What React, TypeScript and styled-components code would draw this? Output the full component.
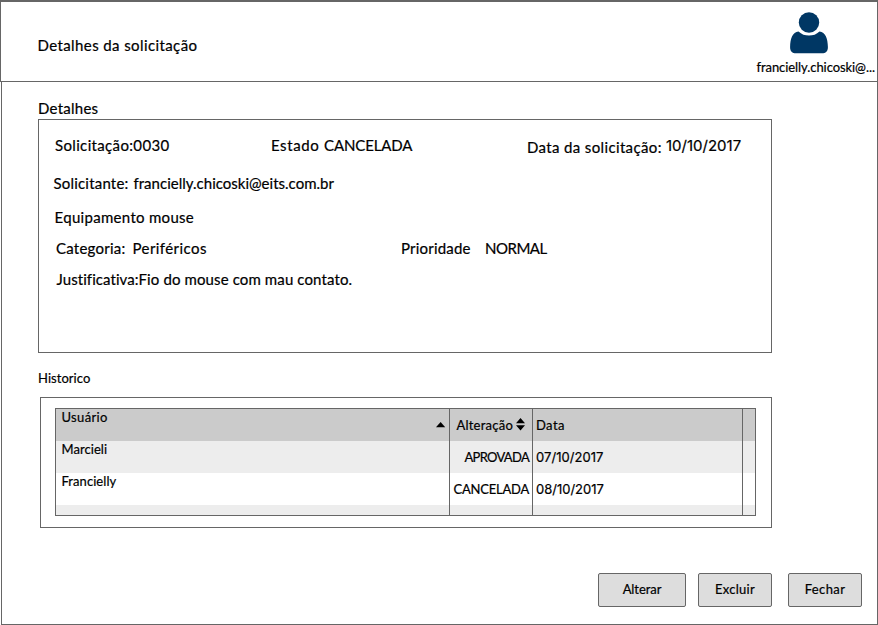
import React from 'react';
import styled, { createGlobalStyle } from 'styled-components';

const line = '#666';

const GlobalStyle = createGlobalStyle`
  *, *::before, *::after { box-sizing: border-box; }
  body { margin: 0; background: #fff; }
`;

const Page = styled.div`
  width: 878px;
  height: 625px;
  display: flex;
  flex-direction: column;
  color: #000;
  font-family: Lato, 'Open Sans', sans-serif;
`;

const Header = styled.header`
  display: flex;
  justify-content: space-between;
  height: 82px;
  flex: none;
  border: 1px solid ${line};
  border-top-width: 2px;
  padding: 33px 1px 0 36.5px;
`;

const Main = styled.main`
  flex: 1;
  display: flex;
  flex-direction: column;
  margin-left: 1px;
  padding: 16px 15px 0 36px;
  border: 1px solid ${line};
  border-top: 0;
`;

const Text = styled.span<{ $track?: number; $indent?: number; $drop?: number }>`
  display: block;
  font-size: 15px;
  line-height: 20px;
  white-space: pre;
  letter-spacing: ${p => p.$track ?? 0}px;
  margin-left: ${p => p.$indent ?? 0}px;
  margin-top: ${p => p.$drop ?? 0}px;
  -webkit-text-stroke: 0.2px #000;
`;

const Small = styled(Text)`
  font-size: 13px;
  line-height: 16px;
`;

const DateText = styled(Text)`
  font-family: Inter, sans-serif;
`;

const SmallDate = styled(Small)`
  font-family: Inter, sans-serif;
`;

const User = styled.div`
  display: flex;
  flex-direction: column;
  align-items: flex-start;
  width: 120px;
  margin-top: -23px;
`;

const Avatar = styled.svg`
  display: block;
  width: 38px;
  height: 42px;
  margin: 0 0 5px 34px;
`;

const Details = styled.section`
  flex: none;
  width: 734px;
  height: 234px;
  margin-top: 1px;
  border: 1px solid ${line};
  padding: 15px 0 0 14px;
`;

const Row = styled.div<{ $height: number }>`
  display: flex;
  align-items: flex-start;
  height: ${p => p.$height}px;
`;

const Label = styled.div<{ $width: number }>`
  flex: none;
  width: ${p => p.$width}px;
`;

const History = styled.section`
  flex: none;
  width: 732px;
  height: 131px;
  margin: 11px 0 0 2px;
  border: 1px solid ${line};
  padding: 10px 14px;
`;

const Table = styled.div`
  width: 701px;
  height: 108px;
  display: flex;
  flex-direction: column;
  overflow: hidden;
  border: 1px solid ${line};
`;

const TableRow = styled.div<{ $fill: string }>`
  display: grid;
  flex: none;
  grid-template-columns: 394px 83px 210px 12px;
  height: 32px;
  background: ${p => p.$fill};
`;

const Cell = styled.div<{ $top?: boolean; $end?: boolean }>`
  display: flex;
  min-width: 0;
  justify-content: ${p => (p.$end ? 'flex-end' : 'flex-start')};
  padding: ${p => (p.$top ? '0 3px 0 5.5px' : '8px 3px 0 3px')};
  border-right: 1px solid ${line};

  &:last-child { border-right: 0; }
`;

const SortUp = styled.svg`
  width: 10px;
  height: 6px;
  margin: 13px 0 0 auto;
`;

const SortBoth = styled.svg`
  flex: none;
  width: 9px;
  height: 13px;
  margin: 1px 4px 0 3px;
`;

const Actions = styled.footer`
  display: flex;
  justify-content: flex-end;
  margin-top: 45px;
`;

const Button = styled.button<{ $width: number; $gap?: number }>`
  display: flex;
  justify-content: center;
  width: ${p => p.$width}px;
  height: 34px;
  margin: 0 0 0 ${p => p.$gap ?? 0}px;
  padding: 7px 0 0;
  border: 1px solid ${line};
  border-radius: 2px;
  background: #ddd;
  color: #000;
  font-family: inherit;
`;

export default function App() {
  return (
    <Page>
      <GlobalStyle />
      <Header>
        <Text $track={0.4}>Detalhes da solicitação</Text>
        <User>
          <Avatar viewBox="0 0 38 42" fill="#003764" aria-hidden="true">
            <circle cx="19" cy="10.5" r="10.2" />
            <path d="M8.500 19.400C11.500 22.300 15 23.500 19 23.500s7.500-1.200 10.500-4.100C35.500 20.200 37.700 26 37.900 35c.1 4.300-2.200 6.300-5.900 6.300H6C2.300 41.300 0 39.300.1 35 .3 26 2.500 20.200 8.500 19.400Z" />
          </Avatar>
          <Small $track={-0.07} $indent={0.5}>francielly.chicoski@...</Small>
        </User>
      </Header>
      <Main>
        <Text $track={0.25}>Detalhes</Text>
        <Details>
          <Row $height={38}>
            <Label $width={218}><Text $track={0.346} $indent={2}>Solicitação:0030</Text></Label>
            <Label $width={53}><Text $track={0.58}>Estado</Text></Label>
            <Label $width={203}><Text $track={-0.12}>CANCELADA</Text></Label>
            <Label $width={139}><Text $track={0.36} $drop={2}>Data da solicitação:</Text></Label>
            <DateText $track={0} $drop={1}>10/10/2017</DateText>
          </Row>
          <Row $height={34}>
            <Label $width={80.5}><Text $track={0.195} $indent={0.5}>Solicitante:</Text></Label>
            <Text $track={0.013}>francielly.chicoski@eits.com.br</Text>
          </Row>
          <Row $height={31}>
            <Text $track={0.3} $indent={1.6}>Equipamento mouse</Text>
          </Row>
          <Row $height={31}>
            <Label $width={79.500}><Text $track={0.24} $indent={3}>Categoria:</Text></Label>
            <Label $width={268.500}><Text $track={0.43}>Periféricos</Text></Label>
            <Label $width={84}><Text $track={0.2}>Prioridade</Text></Label>
            <Text $track={-0.488}>NORMAL</Text>
          </Row>
          <Row $height={31}>
            <Label $width={85.500}><Text $track={0.069} $indent={3.5}>Justificativa:</Text></Label>
            <Text $track={0.12}>Fio do mouse com mau contato.</Text>
          </Row>
        </Details>
        <Small $track={0.05} $drop={17}>Historico</Small>
        <History>
          <Table>
            <TableRow $fill="#cbcbcb">
              <Cell $top>
                <Small $track={0.35}>Usuário</Small>
                <SortUp viewBox="0 0 10 6" aria-hidden="true"><path d="M4.600 0 9.200 5.200H0Z" /></SortUp>
              </Cell>
              <Cell $end>
                <Small $track={0.238}>Alteração</Small>
                <SortBoth viewBox="0 0 9 13" aria-hidden="true"><path d="M4.500 0 9 5.300H0ZM0 7.200H9L4.500 12.500Z" /></SortBoth>
              </Cell>
              <Cell><Small $track={0.4}>Data</Small></Cell>
              <Cell />
            </TableRow>
            <TableRow $fill="#ededed">
              <Cell $top><Small $track={0.063}>Marcieli</Small></Cell>
              <Cell $end><Small $track={-0.7}>APROVADA</Small></Cell>
              <Cell><SmallDate $track={0.05}>07/10/2017</SmallDate></Cell>
              <Cell />
            </TableRow>
            <TableRow $fill="#fff">
              <Cell $top><Small $track={0.06}>Francielly</Small></Cell>
              <Cell $end><Small $track={-0.214}>CANCELADA</Small></Cell>
              <Cell><SmallDate $track={0}>08/10/2017</SmallDate></Cell>
              <Cell />
            </TableRow>
            <TableRow $fill="#ededed">
              <Cell /><Cell /><Cell /><Cell />
            </TableRow>
          </Table>
        </History>
        <Actions>
          <Button $width={88}><Small $track={-0.071}>Alterar</Small></Button>
          <Button $width={74} $gap={12}><Small $track={0.278}>Excluir</Small></Button>
          <Button $width={74} $gap={16}><Small $track={0.385}>Fechar</Small></Button>
        </Actions>
      </Main>
    </Page>
  );
}
